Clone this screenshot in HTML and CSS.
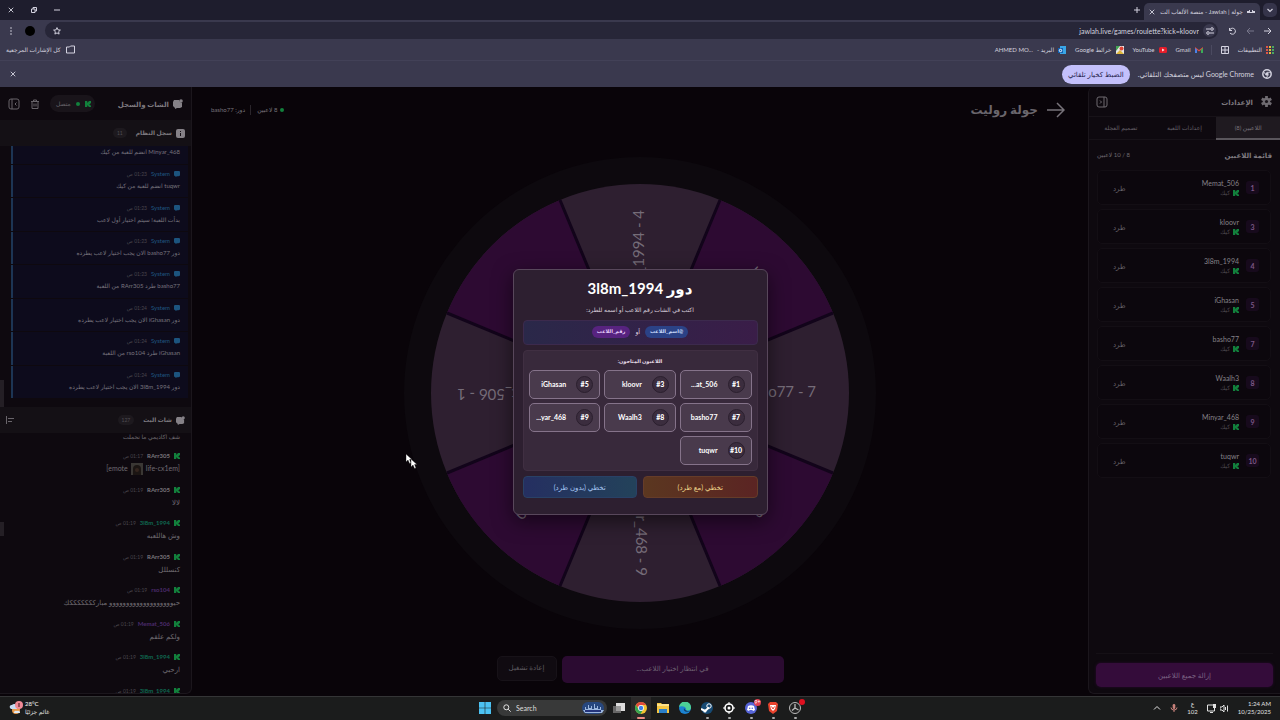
FILE: index.html
```html
<!DOCTYPE html>
<html lang="ar" dir="rtl">
<head>
<meta charset="utf-8">
<title>جولة | Jawlah - منصة الألعاب</title>
<link rel="stylesheet" href="styles.css">
</head>
<body>
<svg class="defs" aria-hidden="true">
  <symbol id="kick" viewBox="0 0 8 8"><path d="M0 0h3v2h1V1h1V0h3v3H7v1H6v1h1v1h1v2H5V7H4V6H3v2H0z"/></symbol>
  <symbol id="sys" viewBox="0 0 8 8"><path d="M1 0h6l1 1v5L6 7H4L2 8V7L0 6V1z"/></symbol>
  <symbol id="chat" viewBox="0 0 10 10"><path d="M1 1h5l1 2 2 1v4L7 9H4l-2 1V9L0 7V3z"/><circle cx="8" cy="2" r="1.800"/></symbol>
  <symbol id="close" viewBox="0 0 8 8"><path d="M1 1l6 6M7 1L1 7" fill="none" stroke="currentColor" stroke-width="1.200"/></symbol>
  <symbol id="collapse" viewBox="0 0 12 12"><g fill="none" stroke="currentColor"><rect x="1" y="1" width="10" height="10" rx="2"/><path d="M4 1v10M8.500 4.500L7 6l1.500 1.500"/></g></symbol>
  <symbol id="expand" viewBox="0 0 12 12"><g fill="none" stroke="currentColor"><rect x="1" y="1" width="10" height="10" rx="2"/><path d="M8 1v10M4 4.500L5.500 6 4 7.500"/></g></symbol>
  <symbol id="chrome" viewBox="0 0 12 12"><circle cx="6" cy="6" r="6" fill="#f2c230"/><path d="M.8 3A6 6 0 0 1 11.200 3H6L4 7z" fill="#e04a3c"/><path d="M.8 3L3.600 7.600 7.800 8.200 5.500 12A6 6 0 0 1 .8 3" fill="#36a552"/><circle cx="6" cy="6" r="2.900" fill="#fff"/><circle cx="6" cy="6" r="2.200" fill="#3d7fe8"/></symbol>
</svg>

<header class="browser">
  <div class="tabstrip">
    <button class="tab-menu" aria-label="البحث في علامات التبويب"><svg class="i8" viewBox="0 0 8 8"><path d="M1.500 3L4 5.500 6.500 3" fill="none" stroke="currentColor" stroke-width="1.200"/></svg></button>
    <div class="tab"><svg class="favicon" viewBox="0 0 8 4"><path d="M0 1h2V0h1v2h2V0h1v1h2v2H0z" fill="currentColor"/></svg><span class="tab-title">جولة | Jawlah - منصة الألعاب الت</span><button aria-label="إغلاق"><svg class="i6"><use href="#close"/></svg></button></div>
    <button class="new-tab" aria-label="علامة جديدة"><svg class="i8" viewBox="0 0 8 8"><path d="M4 1v6M1 4h6" stroke="currentColor"/></svg></button>
    <div class="window-buttons">
      <button aria-label="تصغير"><svg class="i6" viewBox="0 0 6 6"><path d="M0 3h6" stroke="currentColor"/></svg></button>
      <button aria-label="استعادة"><svg class="i6" viewBox="0 0 6 6"><path d="M.5 2h3.500v3.500H.5zM2 2V.5h3.500V4H4" fill="none" stroke="currentColor"/></svg></button>
      <button aria-label="إغلاق النافذة"><svg class="i6"><use href="#close"/></svg></button>
    </div>
  </div>
  <div class="toolbar">
    <button aria-label="رجوع"><svg class="i8" viewBox="0 0 8 8"><path d="M0 4h7M4 1l3 3-3 3" fill="none" stroke="currentColor"/></svg></button>
    <button class="faint" aria-label="التالي"><svg class="i8" viewBox="0 0 8 8"><path d="M8 4H1M4 1L1 4l3 3" fill="none" stroke="currentColor"/></svg></button>
    <button aria-label="تحديث"><svg class="i8" viewBox="0 0 8 8"><path d="M1.500 1v2.500H4M1.500 3.500A3 3 0 1 1 2 6" fill="none" stroke="currentColor"/></svg></button>
    <div class="omnibox">
      <button class="site-info" aria-label="معلومات الموقع"><svg class="i8" viewBox="0 0 8 8"><path d="M0 2h4M4 6h4" stroke="currentColor"/><circle cx="6" cy="2" r="1.300" fill="none" stroke="currentColor"/><circle cx="2" cy="6" r="1.300" fill="none" stroke="currentColor"/></svg></button>
      <input class="url" aria-label="العنوان" dir="ltr" value="jawlah.live/games/roulette?kick=kloovr">
      <button aria-label="إشارة مرجعية"><svg class="i8" viewBox="0 0 8 8"><path d="M4 .6l1 2.300 2.400.2-1.800 1.600.5 2.400L4 5.900 1.900 7.100l.5-2.400L.6 3.100 3 2.900z" fill="none" stroke="currentColor"/></svg></button>
    </div>
    <span class="avatar"></span>
    <button aria-label="القائمة"><svg class="i8" viewBox="0 0 8 8" fill="currentColor"><circle cx="4" cy="1" r=".8"/><circle cx="4" cy="4" r=".8"/><circle cx="4" cy="7" r=".8"/></svg></button>
  </div>
  <nav class="bookmarks">
    <a href="#"><svg class="i8" viewBox="0 0 8 8"><path d="M0 0h2v8H0z" fill="#e05548"/><path d="M3 0h2v8H3z" fill="#e5b93c"/><path d="M6 0h2v8H6z" fill="#4aa860"/><path d="M0 2.500h8M0 5.500h8" stroke="#3a394e"/></svg>التطبيقات</a>
    <a href="#" aria-label="مجلد"><svg class="i8" viewBox="0 0 8 8"><path d="M.5.5h7v7h-7zM0 4h8M4 0v8" fill="none" stroke="currentColor"/></svg></a>
    <a href="#" class="sep"><svg class="i8" viewBox="0 0 8 8"><path d="M0 7V1l4 3 4-3v6H6V4L4 5.500 2 4v3z" fill="#e04a3c"/><path d="M0 7V2l2 1.500V7z" fill="#4b83e8"/><path d="M8 7V2L6 3.500V7z" fill="#3cab58"/></svg>Gmail</a>
    <a href="#"><svg class="i8" viewBox="0 0 8 8"><rect y="1" width="8" height="6" rx="1.500" fill="#e51d2a"/><path d="M3.200 2.600L5.500 4 3.200 5.400z" fill="#fff"/></svg>YouTube</a>
    <a href="#"><svg class="i8" viewBox="0 0 8 8"><path d="M0 0h8v8H0z" fill="#e8e8e8"/><path d="M0 0h4L0 5z" fill="#43a454"/><path d="M0 8l4-4 4 4z" fill="#e0b63a"/><circle cx="5.500" cy="2.500" r="2" fill="#de4538"/></svg>خرائط Google</a>
    <a href="#"><svg class="i8" viewBox="0 0 8 8"><path d="M2 0h6v8H2z" fill="#3aa6e6"/><rect y="2" width="5" height="5" fill="#0f62b5"/><circle cx="2.500" cy="4.500" r="1.200" fill="none" stroke="#fff"/></svg>البريد - <bdi dir="ltr">AHMED MO...</bdi></a>
    <a href="#" class="all"><svg class="i9" viewBox="0 0 9 8"><path d="M.5 1.500h3l1-1h4v7h-8z" fill="none" stroke="currentColor"/></svg>كل الإشارات المرجعية</a>
  </nav>
  <div class="infobar">
    <svg class="i10 mono" viewBox="0 0 12 12"><circle cx="6" cy="6" r="5" fill="none" stroke="currentColor" stroke-width="1.800"/><circle cx="6" cy="6" r="2" fill="currentColor"/><path d="M6 4h5M4.500 7L2 3M7.500 7L5 11" stroke="currentColor"/></svg>
    <span>Google Chrome ليس متصفحك التلقائي.</span>
    <button class="default">الضبط كخيار تلقائي</button>
    <button class="dismiss" aria-label="إغلاق"><svg class="i6"><use href="#close"/></svg></button>
  </div>
</header>

<div class="page">
  <aside class="settings">
    <header class="settings-head"><svg class="i11" viewBox="0 0 12 12"><path d="M6 0v12M.8 3l10.400 6M.8 9l10.400-6" stroke="currentColor" stroke-width="3"/><circle cx="6" cy="6" r="4" fill="currentColor"/><circle cx="6" cy="6" r="1.700" fill="#19141a"/></svg><h2>الإعدادات</h2><button class="push" aria-label="طي"><svg class="i12"><use href="#expand"/></svg></button></header>
    <div class="tabs"><button class="active">اللاعبين (8)</button><button>إعدادات اللعبة</button><button>تصميم العجلة</button></div>
    <div class="list-head"><h3>قائمة اللاعبين</h3><span>8 / 10 لاعبين</span></div>
    <ul class="players">
      <li><b>1</b><div><bdi>Memat_506</bdi><small><svg class="k"><use href="#kick"/></svg>كيك</small></div><button>طرد</button></li>
      <li><b>3</b><div><bdi>kloovr</bdi><small><svg class="k"><use href="#kick"/></svg>كيك</small></div><button>طرد</button></li>
      <li><b>4</b><div><bdi>3l8m_1994</bdi><small><svg class="k"><use href="#kick"/></svg>كيك</small></div><button>طرد</button></li>
      <li><b>5</b><div><bdi>iGhasan</bdi><small><svg class="k"><use href="#kick"/></svg>كيك</small></div><button>طرد</button></li>
      <li><b>7</b><div><bdi>basho77</bdi><small><svg class="k"><use href="#kick"/></svg>كيك</small></div><button>طرد</button></li>
      <li><b>8</b><div><bdi>Waalh3</bdi><small><svg class="k"><use href="#kick"/></svg>كيك</small></div><button>طرد</button></li>
      <li><b>9</b><div><bdi>Minyar_468</bdi><small><svg class="k"><use href="#kick"/></svg>كيك</small></div><button>طرد</button></li>
      <li><b>10</b><div><bdi>tuqwr</bdi><small><svg class="k"><use href="#kick"/></svg>كيك</small></div><button>طرد</button></li>
    </ul>
    <footer class="settings-foot"><button>إزالة جميع اللاعبين</button></footer>
  </aside>

  <main class="game">
    <header class="game-head">
      <svg class="i18" viewBox="0 0 18 18"><path d="M0 9h17M10 2l7 7-7 7" fill="none" stroke="currentColor" stroke-width="1.500"/></svg>
      <h1>جولة روليت</h1>
      <p class="status"><i class="dot"></i><span>8 لاعبين</span><span class="turn">دور: <bdi>basho77</bdi></span></p>
    </header>
    <div class="wheel-area">
      <svg class="wheel" viewBox="-236 -236 472 472" direction="ltr">
        <circle r="236" fill="#0d090e"/>
        <circle r="209" fill="#2e1f30"/>
        <g fill="#2d0a32">
          <path d="M0 0L193.100 -80A209 209 0 0 0 80 -193.100z"/>
          <path d="M0 0L-80 -193.100A209 209 0 0 0 -193.100 -80z"/>
          <path d="M0 0L-193.100 80A209 209 0 0 0 -80 193.100z"/>
          <path d="M0 0L80 193.100A209 209 0 0 0 193.100 80z"/>
        </g>
        <path d="M-193 -80L193 80M-193 80L193 -80M-80 -193L80 193M80 -193L-80 193" stroke="#12041a" stroke-width="3"/>
        <g class="wheel-text">
          <text x="176" y="4">basho77 - 7</text>
          <text x="174" y="4" transform="rotate(-45)">iGhasan - 5</text>
          <text x="183" y="4" transform="rotate(-90)">3l8m_1994 - 4</text>
          <text x="170" y="4" transform="rotate(-135)">kloovr - 3</text>
          <text x="183" y="4" transform="rotate(180)">Memat_506 - 1</text>
          <text x="174" y="4" transform="rotate(135)">tuqwr - 10</text>
          <text x="183" y="4" transform="rotate(90)">Minyar_468 - 9</text>
          <text x="174" y="4" transform="rotate(45)">Waalh3 - 8</text>
        </g>
      </svg>
    </div>
    <footer class="game-foot"><button class="wait">في انتظار اختيار اللاعب...</button><button class="restart">إعادة تشغيل</button></footer>
  </main>

  <aside class="chat">
    <header class="chat-head"><svg class="i10 ic"><use href="#chat"/></svg><h2>الشات والسجل</h2><span class="pill"><svg class="k"><use href="#kick"/></svg><i class="dot"></i>متصل</span><button aria-label="حذف"><svg class="i10" viewBox="0 0 10 10"><path d="M1 2.500h8M3.500 2.500V1h3v1.500M2 2.500V9.500h6V2.500M4 4.500v3M6 4.500v3" fill="none" stroke="currentColor"/></svg></button><button aria-label="طي"><svg class="i12"><use href="#collapse"/></svg></button></header>
    <div class="section-head"><svg class="i9 ic" viewBox="0 0 9 9"><rect width="9" height="9" rx="2"/><path d="M4.500 2v1M4.500 4v3" stroke="#151016"/></svg><h3>سجل النظام</h3><span class="count">11</span></div>
    <div class="log">
      <article><p><bdi>Minyar_468</bdi> انضم للعبة من كيك</p></article>
      <article><div class="meta"><svg class="k"><use href="#sys"/></svg><b>System</b><time>01:23 ص</time></div><p><bdi>tuqwr</bdi> انضم للعبة من كيك</p></article>
      <article><div class="meta"><svg class="k"><use href="#sys"/></svg><b>System</b><time>01:23 ص</time></div><p>بدأت اللعبة! سيتم اختيار أول لاعب</p></article>
      <article><div class="meta"><svg class="k"><use href="#sys"/></svg><b>System</b><time>01:23 ص</time></div><p>دور <bdi>basho77</bdi> الان يجب اختيار لاعب يطرده</p></article>
      <article><div class="meta"><svg class="k"><use href="#sys"/></svg><b>System</b><time>01:23 ص</time></div><p><bdi>basho77</bdi> طرد <bdi>RArr305</bdi> من اللعبة</p></article>
      <article><div class="meta"><svg class="k"><use href="#sys"/></svg><b>System</b><time>01:24 ص</time></div><p>دور <bdi>iGhasan</bdi> الان يجب اختيار لاعب يطرده</p></article>
      <article><div class="meta"><svg class="k"><use href="#sys"/></svg><b>System</b><time>01:24 ص</time></div><p><bdi>iGhasan</bdi> طرد <bdi>rso104</bdi> من اللعبة</p></article>
      <article><div class="meta"><svg class="k"><use href="#sys"/></svg><b>System</b><time>01:24 ص</time></div><p>دور <bdi>3l8m_1994</bdi> الان يجب اختيار لاعب يطرده</p></article>
    </div>
    <div class="section-head second"><svg class="i9 ic"><use href="#chat"/></svg><h3>شات البث</h3><span class="count">127</span><button class="push" aria-label="عرض"><svg class="i8" viewBox="0 0 8 8"><path d="M.5 0v8M2 2.500h6M2 5.500h4" stroke="currentColor"/></svg></button></div>
    <div class="messages">
      <div class="messages-inner">
        <article><p>شف اكاديمي ما نحملت</p></article>
        <article><div class="meta"><svg class="k"><use href="#kick"/></svg><b>RArr305</b><time>01:17 ص</time></div><p dir="ltr" class="emote-line">[emote<svg class="emote" viewBox="0 0 12 12"><path d="M0 0h12v12H0z" fill="#3a3734"/><path d="M2 12V6a4 4 0 0 1 8 0v6z" fill="#1b1513"/><circle cx="6" cy="7" r="2" fill="#33241e"/></svg>life-cx1em]</p></article>
        <article><div class="meta"><svg class="k"><use href="#kick"/></svg><b>RArr305</b><time>01:19 ص</time></div><p>لالا</p></article>
        <article><div class="meta"><svg class="k"><use href="#kick"/></svg><b class="green">3l8m_1994</b><time>01:19 ص</time></div><p>وش هاللعبه</p></article>
        <article><div class="meta"><svg class="k"><use href="#kick"/></svg><b>RArr305</b><time>01:19 ص</time></div><p>كنسللل</p></article>
        <article><div class="meta"><svg class="k"><use href="#kick"/></svg><b class="violet">rso104</b><time>01:19 ص</time></div><p>حيووووووووووووووووووو مباركككككككك</p></article>
        <article><div class="meta"><svg class="k"><use href="#kick"/></svg><b class="violet">Memat_506</b><time>01:19 ص</time></div><p>ولكم علقم</p></article>
        <article><div class="meta"><svg class="k"><use href="#kick"/></svg><b class="green">3l8m_1994</b><time>01:19 ص</time></div><p>ارحبي</p></article>
        <article><div class="meta"><svg class="k"><use href="#kick"/></svg><b class="green">3l8m_1994</b><time>01:19 ص</time></div></article>
      </div>
    </div>
    <i class="thumb upper"></i><i class="thumb lower"></i>
  </aside>

  <div class="overlay">
    <section class="modal" role="dialog" aria-labelledby="turn-title">
      <h2 id="turn-title">دور <bdi dir="ltr">3l8m_1994</bdi></h2>
      <p class="hint">اكتب في الشات رقم اللاعب أو اسمه للطرد:</p>
      <div class="formats"><span class="chip blue">@اسم_اللاعب</span><span>أو</span><span class="chip purple">رقم_اللاعب</span></div>
      <div class="available">
        <h3>اللاعبون المتاحون:</h3>
        <div class="choices">
          <button><b dir="ltr">#1</b><bdi dir="ltr">...at_506</bdi></button>
          <button><b dir="ltr">#3</b><bdi dir="ltr">kloovr</bdi></button>
          <button><b dir="ltr">#5</b><bdi dir="ltr">iGhasan</bdi></button>
          <button><b dir="ltr">#7</b><bdi dir="ltr">basho77</bdi></button>
          <button><b dir="ltr">#8</b><bdi dir="ltr">Waalh3</bdi></button>
          <button><b dir="ltr">#9</b><bdi dir="ltr">...yar_468</bdi></button>
          <button><b dir="ltr">#10</b><bdi dir="ltr">tuqwr</bdi></button>
        </div>
      </div>
      <div class="actions"><button class="skip-kick">تخطي (مع طرد)</button><button class="skip">تخطي (بدون طرد)</button></div>
    </section>
  </div>
  <svg class="cursor" viewBox="0 0 12 15"><path id="ptr" d="M0 0v8l2-2 1.500 3.500 1.500-.6L3.600 5.500H6z" fill="#fff" stroke="#111" stroke-width=".4"/><use href="#ptr" x="5" y="5"/></svg>
</div>

<footer class="taskbar" dir="ltr">
  <div class="weather"><svg class="i14" viewBox="0 0 14 14"><circle cx="7" cy="9" r="4" fill="#e89a4c"/><path d="M1 7a2 2 0 0 1 2-3 3 3 0 0 1 5 1v3H2z" fill="#c5dcf2"/><path d="M5 12a2 2 0 0 1 3-2 2 2 0 0 1 3 2z" fill="#dfeaf5"/><circle cx="10" cy="4" r="4" fill="#f08a96"/><path d="M10 2v4" stroke="#401018"/></svg><p><b>28°C</b><span dir="rtl">غائم جزئيًا</span></p></div>
  <div class="apps">
    <button aria-label="Start"><svg class="i12" viewBox="0 0 12 12" fill="#4cc2f2"><path d="M0 0h5.700v5.700H0zM6.300 0H12v5.700H6.300zM0 6.300h5.700V12H0zM6.300 6.300H12V12H6.300z"/></svg></button>
    <label class="search"><svg class="i8" viewBox="0 0 8 8"><circle cx="3.300" cy="3.300" r="2.500" fill="none" stroke="currentColor"/><path d="M5.200 5.200L7.700 7.700" stroke="currentColor"/></svg><input type="text" placeholder="Search" aria-label="Search"><svg class="city" viewBox="0 0 22 12"><rect width="22" height="12" rx="6" fill="#27477e"/><path d="M1 8h2V5h1v2h2V3h1v3h2V4h1v3h2V2h1v4h2V4h1v3h2V5h1v3h3l-2 3H3z" fill="#9cb7de"/><path d="M3 9h16" stroke="#25357b" stroke-width="2"/></svg></label>
    <button aria-label="Task view"><svg class="i12" viewBox="0 0 12 12"><path d="M0 4h8v7H0z" fill="#666"/><path d="M3 1h9v8H3z" fill="#ddd"/><path d="M3 4h5v5H3z" fill="#999"/></svg></button>
    <button class="current" aria-label="Chrome"><svg class="i12"><use href="#chrome"/></svg></button>
    <button aria-label="Explorer"><svg class="i12" viewBox="0 0 12 12"><path d="M0 1h4l1 1h7v9H0z" fill="#f6c743"/><path d="M0 2h12v2H0z" fill="#fbe08a"/><path d="M2 7h8v4H2z" fill="#2b7fc9"/></svg></button>
    <button aria-label="Edge"><svg class="i12" viewBox="0 0 12 12"><circle cx="6" cy="6" r="6" fill="#1b83d1"/><path d="M0 5a6 6 0 0 1 12 1c0 2-3 3-5 2 1-3-4-5-7-3z" fill="#4cd196"/><path d="M5 6c-1 3 2 5 6 3-2 .3-5 0-6-3z" fill="#12375e"/></svg></button>
    <button class="open" aria-label="Steam"><svg class="i12" viewBox="0 0 12 12"><circle cx="6" cy="6" r="6" fill="#164a74"/><path d="M0 7l4 2 4-3.500" fill="none" stroke="#fff" stroke-width="2"/><circle cx="8" cy="4" r="2.200" fill="none" stroke="#fff"/><circle cx="4" cy="9" r="1.500" fill="#fff"/></svg></button>
    <button class="open" aria-label="SteelSeries"><svg class="i12" viewBox="0 0 12 12"><circle cx="6" cy="6" r="4" fill="none" stroke="#fff" stroke-width="1.600"/><circle cx="6" cy="6" r="1.500" fill="#fff"/><path d="M6 0v3M6 9v3M0 6h2M10 6h2" stroke="#fff"/></svg></button>
    <button class="open" aria-label="Discord"><svg class="i12" viewBox="0 0 12 12"><circle cx="6" cy="6" r="6" fill="#5765d8"/><path d="M3 4q3-1.500 6 0l1 4-2 1-.7-1H4.700L4 9 2 8z" fill="#fff"/><circle cx="4.700" cy="6.200" r=".8" fill="#5765d8"/><circle cx="7.300" cy="6.200" r=".8" fill="#5765d8"/></svg><span class="badge">9+</span></button>
    <button class="open" aria-label="Brave"><svg class="i12" viewBox="0 0 12 12"><path d="M3 0h6l2 2-1 7-4 3-4-3-1-7z" fill="#e9432d"/><path d="M3 3h6L8 7 6 9 4 7z" fill="#fff"/><path d="M4.500 4.500L6 7l1.500-2.500" fill="none" stroke="#e9432d"/></svg></button>
    <button class="open" aria-label="OBS"><svg class="i12" viewBox="0 0 12 12"><circle cx="6" cy="6" r="5.500" fill="#222" stroke="#bbb"/><path d="M6 6V2M6 6l3.500 2M6 6L3 8.500" stroke="#bbb" stroke-width="1.300"/></svg><span class="badge plain"></span></button>
  </div>
  <div class="tray">
    <svg class="i8" viewBox="0 0 8 8"><path d="M1 5.500l3-3 3 3" fill="none" stroke="currentColor"/></svg>
    <svg class="i8 mic" viewBox="0 0 8 8"><rect x="2.700" y="0" width="2.600" height="5" rx="1.300" fill="currentColor"/><path d="M1 3.500a3 2.500 0 0 0 6 0M4 6v2" fill="none" stroke="currentColor"/></svg>
    <p class="lang"><span>ع</span><span>102</span></p>
    <span class="net"><svg class="i9" viewBox="0 0 9 9"><path d="M6 1H.5v6h7V4M3 8.500h3" fill="none" stroke="currentColor"/><path d="M6 0h3v4H6z" fill="currentColor"/></svg><svg class="i9" viewBox="0 0 9 9"><path d="M0 3h2l2-2v7L2 6H0zM5.500 3v3M7.500 1.500v6" fill="none" stroke="currentColor"/></svg></span>
    <p class="clock"><span>1:24 AM</span><span>10/25/2025</span></p>
  </div>
</footer>
</body>
</html>
```
FILE: styles.css
```css
* { box-sizing: border-box; }
body {
  margin: 0;
  min-height: 100vh;
  display: flex;
  flex-direction: column;
  background: #090409;
  color: #6f6b71;
  font-family: Lato, "DejaVu Sans", sans-serif;
  font-size: 7px;
  line-height: 10px;
}
h1, h2, h3, p, ul { margin: 0; padding: 0; }
h1, h2, h3 { white-space: nowrap; }
ul { list-style: none; }
button, input {
  font: inherit;
  color: inherit;
  background: none;
  border: 0;
  padding: 0;
  margin: 0;
  outline: 0;
}
button { display: flex; align-items: center; justify-content: center; flex: none; white-space: nowrap; }
a { color: inherit; text-decoration: none; }
svg { display: block; flex: none; }
.defs { position: absolute; width: 0; height: 0; }
.i6 { width: 6px; height: 6px; }
.i8 { width: 8px; height: 8px; }
.i9 { width: 9px; height: 9px; }
.i10 { width: 10px; height: 10px; }
.i11 { width: 11px; height: 11px; }
.i12 { width: 12px; height: 12px; }
.i14 { width: 14px; height: 14px; }
.i18 { width: 18px; height: 18px; }
.push { margin-inline-start: auto; }
.ic { fill: currentColor; }
.k { width: 6px; height: 6px; fill: #12803c; }
.dot { width: 4px; height: 4px; border-radius: 50%; background: #12803c; }

/* browser frame */
.browser { background: #3a394e; color: #d3d2df; }
.tabstrip { height: 20px; display: flex; align-items: center; background: #1e1d2d; padding: 0 3px 0 8px; gap: 3px; }
.tab-menu { width: 14px; height: 14px; border-radius: 5px; background: #35344a; }
.tab { align-self: end; width: 116px; height: 17px; display: flex; align-items: center; gap: 4px; padding: 0 5px; border-radius: 5px 5px 0 0; background: #3a394e; }
.favicon { width: 8px; height: 4px; }
.tab-title { flex: 1; white-space: nowrap; font-size: 6px; }
.window-buttons { margin-inline-start: auto; display: flex; gap: 17px; }
.toolbar { height: 21px; display: flex; align-items: center; gap: 10px; padding: 0 8px 0 7px; }
.faint { color: #77768a; }
.omnibox { flex: 1; height: 17px; display: flex; align-items: center; gap: 4px; padding: 0 2px 0 8px; border-radius: 9px; background: #272638; }
.site-info { width: 13px; height: 13px; border-radius: 50%; background: #3a394e; }
.url { flex: 1; min-width: 0; text-align: right; font-size: 7px; }
.avatar { width: 10px; height: 10px; border-radius: 50%; background: #000; }
.bookmarks { height: 20px; display: flex; align-items: center; gap: 9px; padding: 0 6px 2px; border-bottom: 1px solid #424157; font-size: 6px; }
.bookmarks a { display: flex; align-items: center; gap: 4px; white-space: nowrap; }
.bookmarks .sep { border-right: 1px solid #4b4a60; padding-right: 8px; }
.bookmarks .all { margin-inline-start: auto; gap: 5px; }
.infobar { height: 26px; display: flex; align-items: center; gap: 8px; padding: 0 8px 0 10px; }
.default { height: 19px; padding: 0 6px; border-radius: 10px; background: #c3c0fb; color: #25234d; }
.dismiss { margin-inline-start: auto; }

/* page */
.page { position: relative; flex: 1; min-height: 609px; display: flex; }
.settings, .chat { display: flex; flex-direction: column; background: #0e090f; border: 1px solid #1b161c; border-top: 0; margin-bottom: 2px; }
.settings { flex: 0 0 192px; border-radius: 6px 0 0 6px; border-right: 0; }
.settings-head { height: 29px; display: flex; align-items: center; gap: 8px; padding: 0 8px 0 7px; }
.settings h2, .settings h3, .chat h2, .chat h3 { color: #7d797f; font-size: 7px; }
.tabs { display: flex; height: 24px; border-top: 1px solid #171218; border-bottom: 1px solid #171218; font-size: 6px; }
.tabs button { flex: 1; color: #625e65; }
.tabs .active { background: #1f1a20; border-bottom: 2px solid #5a565c; color: #777379; margin-bottom: -1px; }
.list-head { height: 30px; display: flex; align-items: center; justify-content: space-between; padding: 0 8px; }
.list-head span { font-size: 6px; }
.players { flex: 1; display: flex; flex-direction: column; gap: 4px; padding: 0 9px 0 8px; }
.players li { height: 35px; display: flex; align-items: center; gap: 7px; padding: 0 11px; border: 1px solid #130e14; border-radius: 5px; background: #0c070d; }
.players b { width: 13px; height: 13px; display: grid; place-items: center; border-radius: 3px; background: #170a1c; color: #7d5786; }
.players div { flex: 1; }
.players bdi { display: block; color: #868288; text-align: right; }
.players small { display: flex; align-items: center; gap: 3px; font-size: 6px; color: #4e4a50; }
.players button { color: #67636a; padding: 0 2px 0 4px; }
.settings-foot { margin: 0 7px; padding: 9px 0 6px; border-top: 1px solid #151016; }
.settings-foot button { width: 100%; height: 24px; border-radius: 5px; background: #340c3a; color: #7b6384; box-shadow: 0 0 3px #2a0a30; }

.game { flex: 1; min-width: 0; display: flex; flex-direction: column; }
.game-head { height: 46px; display: flex; align-items: center; gap: 9px; padding: 0 23px 0 19px; color: #77737a; }
.game-head h1 { font-size: 12px; line-height: 18px; font-weight: 600; color: #6a666c; }
.status { margin-inline-start: auto; display: flex; align-items: center; gap: 3px; font-size: 6px; }
.turn { border-right: 1px solid #2a252b; margin-right: 3px; padding-right: 5px; }
.wheel-area { flex: 1; display: flex; align-items: center; justify-content: center; }
.wheel { width: 472px; height: 472px; }
.wheel-text { font-size: 15px; fill: #756c78; text-anchor: end; }
.game-foot { height: 44px; display: flex; align-items: flex-start; justify-content: center; gap: 5px; padding-top: 4px; }
.game-foot button { padding-bottom: 3px; }
.game-foot .wait { width: 222px; height: 27px; border-radius: 5px; background: #2b0b31; color: #6d6171; }
.game-foot .restart { width: 60px; height: 25px; border-radius: 5px; background: #100b11; border: 1px solid #171218; color: #5e5a60; }

.chat { position: relative; flex: 0 0 192px; border-left: 0; border-radius: 0 0 6px 0; }
.chat-head { height: 33px; display: flex; align-items: center; gap: 4px; padding: 0 8px; color: #68646a; }
.chat-head .ic, .section-head .ic { color: #858187; }
.pill { margin-inline-start: auto; margin-left: 6px; height: 17px; display: flex; align-items: center; gap: 5px; padding: 0 4px 0 6px; border-radius: 9px; background: #19141a; font-size: 6px; }
.chat-head button { margin-left: 6px; }
.chat-head button:last-child { margin-left: 0; }
.section-head { height: 26px; display: flex; align-items: center; gap: 4px; padding: 0 6px; background: #141015; color: #69656b; }
.chat .section-head h3 { font-size: 6px; }
.section-head.second { height: 26px; }
.count { margin-right: 5px; padding: 0 4px; border-radius: 6px; background: #1d191e; color: #514d54; font-size: 5px; }
.log { height: 261px; padding: 0 3px 9px 11px; display: grid; grid-template-rows: 18px repeat(7, 1fr); row-gap: 1px; }
.log article { min-height: 0; display: flex; flex-direction: column; justify-content: center; border-left: 2px solid #1d3554; background: #0d0b1c; padding: 0 8px 2px; }
.log .k { fill: #1c547e; }
.log .meta b { color: #1f5680; font-weight: 400; }
.log article:first-child { justify-content: start; }
.meta { display: flex; align-items: center; gap: 4px; height: 12px; font-size: 6px; }
.meta time { font-size: 5px; color: #4a464d; }
.meta b { color: #7a767d; }
.meta .green { color: #0f6a51; }
.meta .violet { color: #4b2b6b; }
.chat article p { font-size: 7px; line-height: 12px; white-space: nowrap; }
.chat .log p { font-size: 6px; color: #77737c; }
.messages { flex: 1 1 0; min-height: 0; overflow: hidden; padding: 0 11px; }
.messages-inner { height: 281px; display: grid; grid-template-rows: 13px repeat(8, 1fr); }
.messages article { min-height: 0; padding-top: 4px; }
.messages article:first-child { padding-top: 0; }
.messages article p { line-height: 13px; }
.messages article:first-child p { font-size: 6px; line-height: 8px; }
.emote-line { display: flex; align-items: center; justify-content: flex-end; gap: 3px; }
.emote { width: 12px; height: 12px; }
.thumb { position: absolute; left: 0; width: 4px; background: #241f25; }
.upper { top: 293px; height: 27px; }
.lower { top: 435px; height: 14px; }

/* turn dialog */
.overlay { position: absolute; inset: 0; display: flex; align-items: center; justify-content: center; }
.modal { width: 255px; padding: 7px 9px 16px; border: 1px solid #58475b; border-radius: 6px; background: #2d1f30; color: #e6dde8; text-align: center; box-shadow: 0 6px 20px #0008; }
.modal h2 { font-size: 15px; line-height: 22px; color: #fff; }
.hint { font-size: 6px; line-height: 12px; margin-top: 5px; color: #d8cfdb; }
.formats { display: flex; align-items: center; justify-content: center; gap: 5px; height: 25px; margin-top: 4px; border-radius: 4px; background: linear-gradient(to left, #3a1d48, #2a2849); border: 1px solid #3c2a4d; font-size: 6px; }
.chip { height: 12px; line-height: 11px; padding: 0 5px; border-radius: 6px; color: #c9dafa; background: #2b4286; font-size: 5px; font-weight: 700; }
.purple { background: #57237f; color: #e6cdfa; }
.available { margin-top: 5px; padding: 5px; border: 1px solid #402f42; border-radius: 4px; background: #38293b; }
.available h3 { font-size: 5px; line-height: 10px; margin-bottom: 4px; }
.choices { display: grid; grid-template-columns: repeat(3, 1fr); gap: 4px; }
.choices button { height: 29px; justify-content: flex-start; gap: 10px; padding: 0 6px; border: 1px solid #85738a; border-radius: 5px; background: #493a4c; color: #fff; font-weight: 700; }
.choices b { width: 17px; height: 17px; flex: none; display: grid; place-items: center; border: 1px solid #2b1f2e; border-radius: 50%; background: #3b2d3e; }
.actions { display: flex; gap: 6px; margin-top: 5px; }
.actions button { flex: 1; height: 22px; border-radius: 4px; }
.skip-kick { background: linear-gradient(to left, #5b2423, #5b3720); color: #f0d78c; border: 1px solid #653c29; }
.skip { background: linear-gradient(to left, #23425a, #252f61); color: #a9c8f5; border: 1px solid #294166; }
.cursor { position: absolute; left: 406px; top: 367px; width: 12px; height: 15px; }

/* taskbar */
.taskbar { height: 24px; display: grid; grid-template-columns: 1fr auto 1fr; align-items: center; background: #1b1c1c; border-top: 1px solid #343536; color: #e2e2e2; padding-bottom: 1px; }
.weather { display: flex; align-items: center; gap: 2px; padding-left: 9px; line-height: 8px; }
.weather span, .weather b, .lang span, .clock span { display: block; }
.weather b { font-weight: 600; font-size: 6px; }
.weather span { font-size: 6px; }
.apps { display: flex; align-items: center; gap: 2px; }
.apps button { position: relative; width: 20px; height: 22px; }
.search { width: 110px; height: 16px; display: flex; align-items: center; gap: 5px; padding: 0 3px 0 6px; border-radius: 8px; background: #383939; }
.search input { flex: 1; min-width: 0; font-size: 7px; }
.search input::placeholder { color: #ddd; opacity: 1; }
.city { width: 22px; height: 12px; }
.current { background: #2b2929; }
.open::after, .current::after { content: ""; position: absolute; left: 9px; bottom: 0; width: 3px; height: 2px; border-radius: 1px; background: #aaa; }
.current::after { left: 6px; width: 8px; background: #ef8b82; }
.badge { position: absolute; right: 0; top: 2px; min-width: 7px; height: 7px; border-radius: 4px; background: #df4052; color: #fff; font-size: 5px; line-height: 7px; }
.plain { width: 6px; min-width: 0; height: 6px; background: #e01020; }
.tray { display: flex; align-items: center; justify-content: flex-end; gap: 9px; padding-right: 9px; line-height: 8px; }
.mic { color: #c9827c; }
.lang { text-align: center; font-size: 6px; }
.net { display: flex; gap: 4px; }
.clock { text-align: right; font-size: 6px; }
```
